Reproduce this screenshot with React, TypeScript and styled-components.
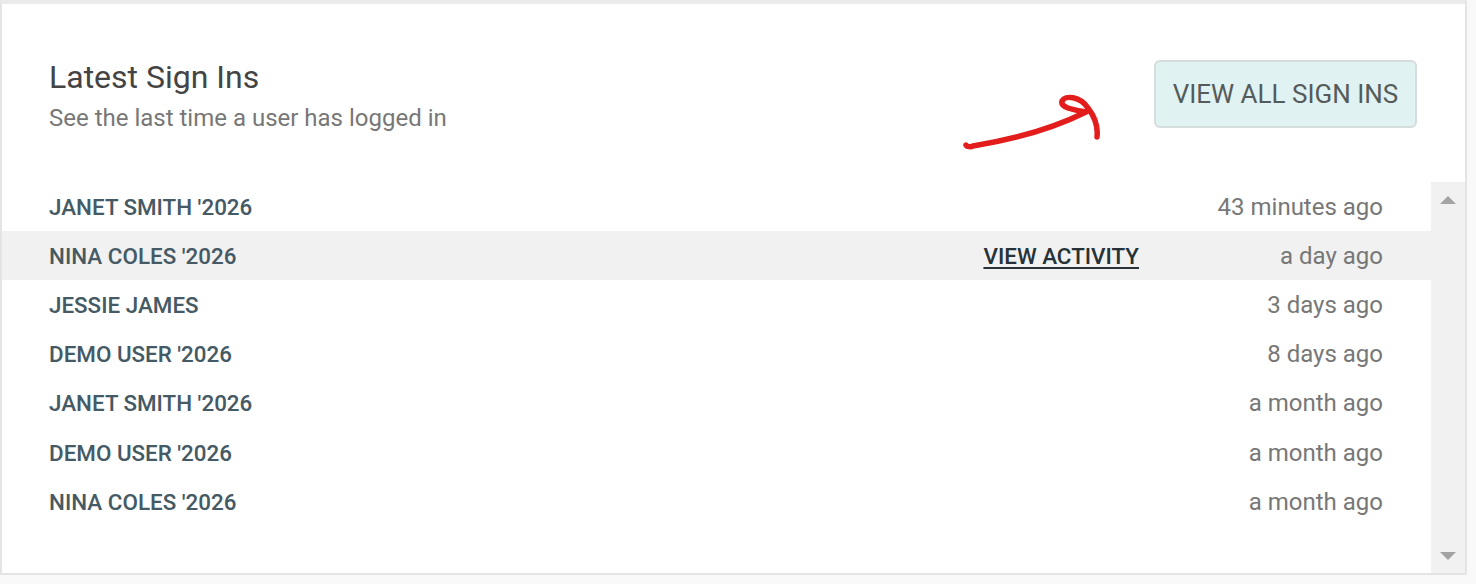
import React from 'react';
import styled, {createGlobalStyle} from 'styled-components';

const GlobalStyle = createGlobalStyle`
  body {
    margin: 0;
    background-color: #f9f9f9;
    font-family: Roboto, "Liberation Sans", sans-serif;
  }
`

type SignIn = {
    name: string
    time: string
    active?: boolean
}

const signIns: SignIn[] = [
    {name: "JANET SMITH '2026", time: '43 minutes ago'},
    {name: "NINA COLES '2026", time: 'a day ago', active: true},
    {name: 'JESSIE JAMES', time: '3 days ago'},
    {name: "DEMO USER '2026", time: '8 days ago'},
    {name: "JANET SMITH '2026", time: 'a month ago'},
    {name: "DEMO USER '2026", time: 'a month ago'},
    {name: "NINA COLES '2026", time: 'a month ago'},
]

export default function App() {
    return (
        <Page>
            <GlobalStyle/>
            <Card>
                <Header>
                    <div>
                        <Title>Latest Sign Ins</Title>
                        <Subtitle>See the last time a user has logged in</Subtitle>
                    </div>
                    <ViewAllButton>VIEW ALL SIGN INS</ViewAllButton>
                </Header>
                <ListArea>
                    <Rows>
                        {signIns.map((item, index) => (
                            <Row key={index} active={item.active}>
                                <Name>{item.name}</Name>
                                {item.active ? <ActivityLink href="#">VIEW ACTIVITY</ActivityLink> : <span/>}
                                <Time>{item.time}</Time>
                            </Row>
                        ))}
                    </Rows>
                    <Scrollbar>
                        <ArrowUp/>
                        <ArrowDown/>
                    </Scrollbar>
                </ListArea>
                <Annotation width="150" height="60" viewBox="0 0 150 60">
                    <path
                        d="M11 55 C12 57 16 57 18 56 C55 50 95 40 131 22 C120 20 105 18 107 11 C110 5 125 6 133 18 C140 27 143 38 142 47"
                        fill="none"
                        stroke="#e31c1c"
                        strokeWidth="5.5"
                        strokeLinecap="round"
                        strokeLinejoin="round"
                    />
                </Annotation>
            </Card>
        </Page>
    );
}

const Page = styled.div`
  width: 1476px;
  height: 584px;
`

const Card = styled.div`
  position: relative;
  box-sizing: border-box;
  width: 1467px;
  height: 575px;
  background-color: #ffffff;
  border-style: solid;
  border-color: #e4e4e4;
  border-width: 4px 2px 2px 2px;
  border-top-color: #eaeaea;
`

const Header = styled.div`
  box-sizing: border-box;
  display: flex;
  justify-content: space-between;
  align-items: center;
  height: 178px;
  padding: 4px 46px 0 47px;
`

const Title = styled.h2`
  margin: 0;
  font-size: 32px;
  line-height: 38px;
  font-weight: 400;
  color: #444444;
`

const Subtitle = styled.p`
  margin: 8px 0 0;
  font-size: 24px;
  line-height: 29px;
  color: #777777;
`

const ViewAllButton = styled.button`
  box-sizing: border-box;
  width: 263px;
  height: 68px;
  margin: 0 2px 2px 0;
  padding: 0;
  border: 2px solid #d5dddd;
  border-radius: 6px;
  background-color: #e0f2f1;
  color: #555b5b;
  font-family: Roboto, "Liberation Sans", sans-serif;
  font-size: 26px;
  font-weight: 400;
  cursor: pointer;
`

const ListArea = styled.div`
  display: flex;
  height: 391px;
`

const Rows = styled.div`
  flex: 1;
`

const Row = styled.div<{active?: boolean}>`
  box-sizing: border-box;
  display: grid;
  grid-template-columns: 1fr auto 244px;
  align-items: center;
  height: 49.2px;
  padding: 0 48px 0 47px;
  background-color: ${p => p.active ? '#f1f1f1' : 'transparent'};
`

const Name = styled.span`
  font-family: "Roboto Medium", Roboto, "Liberation Sans", sans-serif;
  font-size: 22.4px;
  font-weight: 500;
  color: #455a64;
`

const ActivityLink = styled.a`
  font-family: "Roboto Medium", Roboto, "Liberation Sans", sans-serif;
  font-size: 22.4px;
  font-weight: 500;
  color: #263238;
  text-decoration: underline;
  text-underline-offset: 3px;
`

const Time = styled.span`
  text-align: right;
  font-size: 24px;
  color: #777777;
`

const Scrollbar = styled.div`
  box-sizing: border-box;
  width: 34px;
  display: flex;
  flex-direction: column;
  justify-content: space-between;
  align-items: center;
  padding: 14px 0 13px;
  background-color: #f1f1f1;
`

const ArrowUp = styled.div`
  width: 0;
  height: 0;
  border-left: 8px solid transparent;
  border-right: 8px solid transparent;
  border-bottom: 8px solid #a3a3a3;
`

const ArrowDown = styled.div`
  width: 0;
  height: 0;
  border-left: 8px solid transparent;
  border-right: 8px solid transparent;
  border-top: 8px solid #a3a3a3;
`

const Annotation = styled.svg`
  position: absolute;
  left: 953px;
  top: 86px;
  pointer-events: none;
`
